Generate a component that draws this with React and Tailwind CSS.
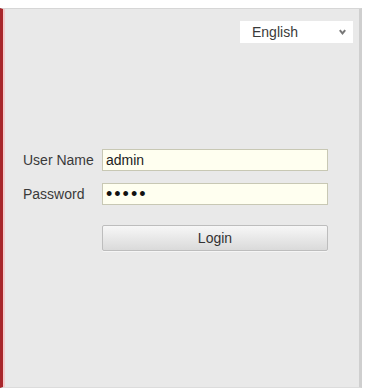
import React, { useState } from 'react';

function App() {
  const [lang, setLang] = useState('English');
  const [userName, setUserName] = useState('admin');
  const [password, setPassword] = useState('12345');

  return (
    <div className="w-[365px] h-[390px] bg-white pt-2 font-['Liberation_Sans',Arial,sans-serif] text-[14px] text-[#3a3a3a]">
      <div className="w-[362px] h-[380px] bg-[#e9e9e9] border-l-[3px] border-l-[#a8262b] border-t border-t-[#d6d6d6] border-r-[3px] border-r-[#cfcfcf] border-b border-b-[#dcdcdc] shadow-[inset_2px_0_0_#f3c9cb]">
        <div className="flex justify-end pt-3 pr-[6px]">
          <div className="relative w-[113px] h-[22px] bg-white">
            <select
              value={lang}
              onChange={(e) => setLang(e.target.value)}
              className="appearance-none w-full h-full bg-transparent pl-3 outline-none text-[14px] leading-[22px]"
            >
              <option>English</option>
            </select>
            <svg className="absolute right-[7px] top-[8px] w-[7px] h-[6px]" viewBox="0 0 7 6">
              <path d="M0.8 1.2 L3.5 4.4 L6.2 1.2" fill="none" stroke="#777" strokeWidth="2" />
            </svg>
          </div>
        </div>

        <form className="mt-[106px] pl-[20px] flex flex-col" onSubmit={(e) => e.preventDefault()}>
          <div className="flex items-center h-[22px]">
            <label className="w-[79px]">User Name</label>
            <input
              value={userName}
              onChange={(e) => setUserName(e.target.value)}
              className="w-[226px] h-[22px] bg-[#fffff0] border border-[#c8c8b4] px-[3px] outline-none text-[14px] text-[#222]"
            />
          </div>
          <div className="flex items-center h-[22px] mt-3">
            <label className="w-[79px]">Password</label>
            <input
              type="password"
              value={password}
              onChange={(e) => setPassword(e.target.value)}
              className="w-[226px] h-[22px] bg-[#fffff0] border border-[#c8c8b4] px-[3px] outline-none text-[18px] text-[#111] tracking-[2px]"
            />
          </div>
          <div className="flex mt-5 pl-[79px]">
            <button
              type="submit"
              className="w-[226px] h-[26px] rounded-[2px] border border-[#bdbdbd] bg-gradient-to-b from-[#f7f7f7] to-[#dadada] text-[14px] text-[#333] shadow-[0_1px_0_#f5f5f5]"
            >
              Login
            </button>
          </div>
        </form>
      </div>
    </div>
  );
}

export default App;
